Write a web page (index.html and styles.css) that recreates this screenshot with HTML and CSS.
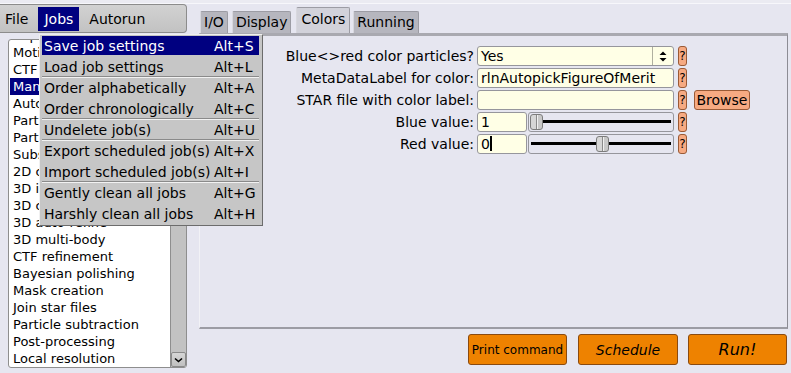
FILE: index.html
```html
<!DOCTYPE html>
<html lang="en">
<head>
    <meta charset="UTF-8">
    <meta name="viewport" content="width=device-width, initial-scale=1.0">
    <title>RELION</title>
    <link rel="stylesheet" href="styles.css">
</head>
<body>
    <div class="topStrip"></div>
    <div class="app">
        <div class="leftCol">
            <div class="menuBar">
                <span class="menuTitle">File</span>
                <span class="menuTitle open">Jobs</span>
                <span class="menuTitle">Autorun</span>
            </div>
            <div class="jobList">
                <div class="jobItems">
                    <div class="jobItem">Import</div>
                    <div class="jobItem">Motion correction</div>
                    <div class="jobItem">CTF estimation</div>
                    <div class="jobItem selected">Manual picking</div>
                    <div class="jobItem">Auto-picking</div>
                    <div class="jobItem">Particle extraction</div>
                    <div class="jobItem">Particle sorting</div>
                    <div class="jobItem">Subset selection</div>
                    <div class="jobItem">2D classification</div>
                    <div class="jobItem">3D initial model</div>
                    <div class="jobItem">3D classification</div>
                    <div class="jobItem">3D auto-refine</div>
                    <div class="jobItem">3D multi-body</div>
                    <div class="jobItem">CTF refinement</div>
                    <div class="jobItem">Bayesian polishing</div>
                    <div class="jobItem">Mask creation</div>
                    <div class="jobItem">Join star files</div>
                    <div class="jobItem">Particle subtraction</div>
                    <div class="jobItem">Post-processing</div>
                    <div class="jobItem">Local resolution</div>
                </div>
                <div class="scrollBar">
                    <div class="scrollDown">
                        <svg width="9" height="6" viewBox="0 0 9 6"><path d="M1 1.5 L4.5 4.5 L8 1.5" fill="none" stroke="#000" stroke-width="1.6"/></svg>
                    </div>
                </div>
            </div>
        </div>

        <div class="rightCol">
            <div class="tabs">
                <span class="tab">I/O</span>
                <span class="tab">Display</span>
                <span class="tab active">Colors</span>
                <span class="tab">Running</span>
            </div>
            <div class="panel">
                <div class="formRow">
                    <label class="fieldLabel">Blue&lt;&gt;red color particles?</label>
                    <div class="choice">
                        <span class="choiceText">Yes</span>
                        <span class="choiceArrows">
                            <svg width="8" height="11" viewBox="0 0 8 11"><path d="M4 0.5 L7.5 4 L0.5 4 Z M4 10.5 L7.5 7 L0.5 7 Z" fill="#000"/></svg>
                        </span>
                    </div>
                    <button class="helpBtn">?</button>
                </div>
                <div class="formRow">
                    <label class="fieldLabel">MetaDataLabel for color:</label>
                    <input class="textInput" type="text" value="rlnAutopickFigureOfMerit">
                    <button class="helpBtn">?</button>
                </div>
                <div class="formRow">
                    <label class="fieldLabel">STAR file with color label:</label>
                    <input class="textInput" type="text" value="">
                    <button class="helpBtn">?</button>
                    <button class="browseBtn">Browse</button>
                </div>
                <div class="formRow">
                    <label class="fieldLabel">Blue value:</label>
                    <input class="numInput" type="text" value="1">
                    <div class="slider">
                        <div class="sliderTrack"></div>
                        <div class="sliderThumb" style="left: 1px"></div>
                    </div>
                    <button class="helpBtn">?</button>
                </div>
                <div class="formRow">
                    <label class="fieldLabel">Red value:</label>
                    <div class="numInput editing">0<span class="caret"></span></div>
                    <div class="slider">
                        <div class="sliderTrack"></div>
                        <div class="sliderThumb" style="left: 67px"></div>
                    </div>
                    <button class="helpBtn">?</button>
                </div>
            </div>
            <div class="actions">
                <button class="runBtn printBtn">Print command</button>
                <button class="runBtn scheduleBtn">Schedule</button>
                <button class="runBtn goBtn">Run!</button>
            </div>
        </div>
    </div>

    <div class="dropMenu">
        <div class="menuItem highlighted"><span class="itemLabel">Save job settings</span><span class="shortcut">Alt+S</span></div>
        <div class="menuItem divider"><span class="itemLabel">Load job settings</span><span class="shortcut">Alt+L</span></div>
        <div class="menuItem"><span class="itemLabel">Order alphabetically</span><span class="shortcut">Alt+A</span></div>
        <div class="menuItem divider"><span class="itemLabel">Order chronologically</span><span class="shortcut">Alt+C</span></div>
        <div class="menuItem divider"><span class="itemLabel">Undelete job(s)</span><span class="shortcut">Alt+U</span></div>
        <div class="menuItem"><span class="itemLabel">Export scheduled job(s)</span><span class="shortcut">Alt+X</span></div>
        <div class="menuItem divider"><span class="itemLabel">Import scheduled job(s)</span><span class="shortcut">Alt+I</span></div>
        <div class="menuItem"><span class="itemLabel">Gently clean all jobs</span><span class="shortcut">Alt+G</span></div>
        <div class="menuItem"><span class="itemLabel">Harshly clean all jobs</span><span class="shortcut">Alt+H</span></div>
    </div>
</body>
</html>
```

FILE: styles.css
```css
body {
    margin: 0;
    font-family: "DejaVu Sans", "Liberation Sans", sans-serif;
    font-size: 14px;
    color: #000;
    background-color: #e6e6f0;
    overflow: hidden;
}

.topStrip {
    height: 3px;
    background-color: #ebebf2;
    border-bottom: 1px solid #f7f7fb;
}

.app {
    display: flex;
}

/* left column: menu bar + job type browser */

.leftCol {
    width: 187px;
    display: flex;
    flex-direction: column;
}

.menuBar {
    height: 29px;
    box-sizing: border-box;
    display: flex;
    gap: 4px;
    padding: 2px 0 1px 0;
    border: 1px solid #8c8c8c;
    border-left: none;
    border-radius: 0 4px 4px 0;
    background: linear-gradient(#d2d2d2, #c2c2c2);
}

.menuTitle {
    padding: 0 6px;
    line-height: 24px;
}

.menuTitle:first-child {
    margin-left: -1px;
}

.menuTitle.open {
    background-color: #000080;
    color: #fff;
}

.jobList {
    margin: 6px 0 0 8px;
    height: 329px;
    box-sizing: border-box;
    display: flex;
    background-color: #fff;
    border: 1px solid #8e8e8e;
    border-radius: 3px;
    overflow: hidden;
}

.jobItems {
    flex: 1;
    margin-top: -13px;
    padding-left: 1px;
    font-size: 13px;
    overflow: hidden;
}

.jobItem {
    height: 17px;
    line-height: 17px;
    padding-left: 3px;
    white-space: nowrap;
}

.jobItem.selected {
    background-color: #000080;
    color: #fff;
}

.scrollBar {
    width: 15px;
    display: flex;
    flex-direction: column;
    justify-content: flex-end;
    background-color: #c2c2c2;
    border-left: 1px solid #8e8e8e;
}

.scrollDown {
    height: 15px;
    box-sizing: border-box;
    display: flex;
    align-items: center;
    justify-content: center;
    border: 1px solid #8a8a8a;
    border-radius: 2px;
    background: linear-gradient(#d6d6d6, #c0c0c0);
}

/* right column: tabs, form panel, run buttons */

.rightCol {
    width: 589px;
    margin-left: 12px;
    display: flex;
    flex-direction: column;
}

.tabs {
    height: 29px;
    display: flex;
    align-items: flex-end;
    gap: 4px;
    padding-left: 1px;
}

.tab {
    height: 22px;
    line-height: 21px;
    padding: 0 3px;
    box-sizing: border-box;
    background-color: #b6b6be;
    border: 1px solid #9c9ca4;
    border-bottom: none;
    border-left-color: #d8d8de;
    border-radius: 2px 2px 0 0;
}

.tab.active {
    height: 26px;
    line-height: 22px;
    padding: 0 4px;
    background-color: #d2d2da;
    margin: 0 -1px 0 1px;
}

.panel {
    height: 296px;
    box-sizing: border-box;
    padding-top: 10px;
    display: flex;
    flex-direction: column;
    gap: 2px;
    background-color: #e6e6f0;
    border-top: 3px solid #a9a9b0;
    border-right: 1px solid #8c8c94;
    border-bottom: 2px solid #9c9ca4;
    border-left: 1px solid #f2f2f6;
}

.formRow {
    height: 20px;
    display: flex;
    align-items: center;
}

.fieldLabel {
    width: 274px;
    margin-right: 3px;
    text-align: right;
    white-space: nowrap;
}

.textInput, .numInput, .choice {
    height: 20px;
    box-sizing: border-box;
    border: 1px solid #96969c;
    border-radius: 3px;
    background-color: #ffffe6;
    font-family: inherit;
    font-size: 14px;
    color: #000;
    padding: 0 0 0 3px;
    outline: none;
}

.textInput, .choice {
    width: 197px;
}

.choice {
    display: flex;
    align-items: center;
    padding: 0;
}

.choiceText {
    flex: 1;
    padding-left: 3px;
}

.choiceArrows {
    width: 20px;
    height: 100%;
    border-left: 1px solid #b0b0a0;
    display: flex;
    align-items: center;
    justify-content: center;
}

.numInput {
    width: 50px;
}

.numInput.editing {
    line-height: 18px;
}

.caret {
    display: inline-block;
    width: 2px;
    height: 15px;
    background-color: #000;
    vertical-align: -2px;
}

.slider {
    position: relative;
    width: 146px;
    height: 20px;
    margin-left: 1px;
    box-sizing: border-box;
    border: 1px solid #96969c;
    border-radius: 3px;
}

.sliderTrack {
    margin: 7px 2px 0 2px;
    height: 3px;
    background-color: #000;
}

.sliderThumb {
    position: absolute;
    top: 1px;
    width: 13px;
    height: 16px;
    box-sizing: border-box;
    border: 1px solid #7c7c7c;
    border-radius: 3px;
    background: linear-gradient(90deg, #d6d6d6 0, #d6d6d6 5px, #8a8a8a 5px, #8a8a8a 6px, #f0f0f0 6px, #f0f0f0 7px, #c8c8c8 7px);
}

.helpBtn, .browseBtn {
    height: 20px;
    box-sizing: border-box;
    margin-left: 4px;
    padding: 0;
    border: 1px solid #9a5a36;
    border-radius: 3px;
    background-color: #f6aa82;
    font-family: inherit;
    font-size: 14px;
    color: #000;
}

.helpBtn {
    width: 9px;
    font-size: 12px;
}

.browseBtn {
    width: 56px;
    margin-left: 7px;
}

.actions {
    margin-top: 5px;
    display: flex;
    justify-content: flex-end;
    padding-right: 1px;
}

.runBtn {
    height: 31px;
    box-sizing: border-box;
    padding: 0;
    border: 1px solid #8a4a10;
    border-radius: 3px;
    background-color: #ee8200;
    font-family: inherit;
    color: #000;
}

.printBtn {
    width: 99px;
    font-size: 12px;
}

.scheduleBtn {
    width: 100px;
    margin-left: 11px;
    font-size: 14px;
    font-style: italic;
}

.goBtn {
    width: 99px;
    margin-left: 10px;
    font-size: 16px;
    font-style: italic;
}

/* the open Jobs menu */

.dropMenu {
    position: absolute;
    left: 39px;
    top: 34px;
    width: 224px;
    box-sizing: border-box;
    padding: 1px 3px 2px 2px;
    background-color: #c6c6c6;
    border: 1px solid;
    border-color: #f0f0f0 #6c6c6c #6c6c6c #f0f0f0;
}

.menuItem {
    height: 19px;
    margin-bottom: 2px;
    display: flex;
    align-items: center;
    white-space: nowrap;
}

.menuItem:last-child {
    margin-bottom: 0;
}

.menuItem.divider {
    box-shadow: 0 1px 0 #8a8a8a, 0 2px 0 #f2f2f2;
}

.menuItem.highlighted {
    background-color: #000080;
    color: #fff;
}

.itemLabel {
    flex: 1;
    padding-left: 2px;
}

.shortcut {
    width: 45px;
}
```
